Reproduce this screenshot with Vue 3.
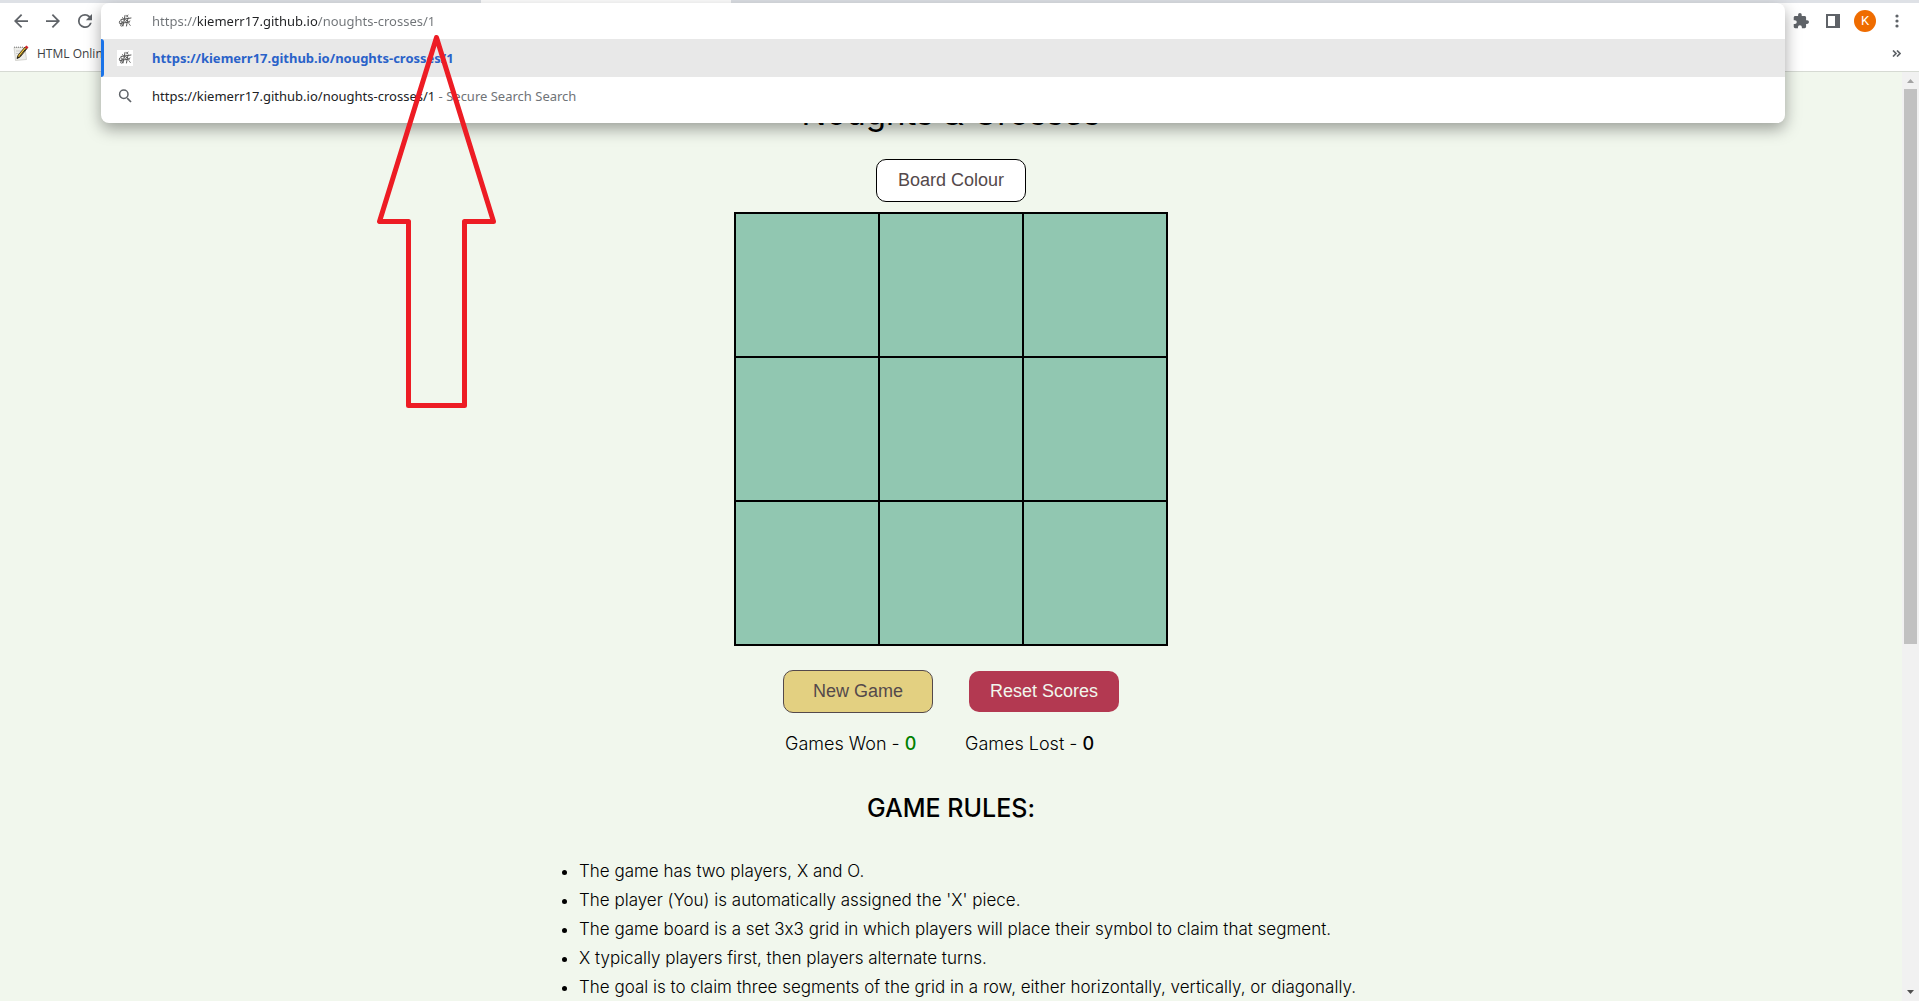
<script setup>
import { ref } from 'vue'

const url = ref('https://kiemerr17.github.io/noughts-crosses/1')
const won = ref(0)
const lost = ref(0)
const rules = [
  'The game has two players, X and O.',
  "The player (You) is automatically assigned the 'X' piece.",
  'The game board is a set 3x3 grid in which players will place their symbol to claim that segment.',
  'X typically players first, then players alternate turns.',
  'The goal is to claim three segments of the grid in a row, either horizontally, vertically, or diagonally.',
]
</script>

<template>
  <div class="window">
    <div class="tabs"><div class="tab"></div></div>

    <header class="toolbar">
      <nav class="group">
        <button class="tool" aria-label="Back">
          <svg width="14" height="14" viewBox="4 4 16 16"><path d="M20 11H7.83l5.59-5.59L12 4l-8 8 8 8 1.41-1.41L7.83 13H20v-2z" /></svg>
        </button>
        <button class="tool" aria-label="Forward">
          <svg width="14" height="14" viewBox="4 4 16 16"><path d="M12 4l-1.41 1.41L16.17 11H4v2h12.17l-5.58 5.59L12 20l8-8z" /></svg>
        </button>
        <button class="tool" aria-label="Reload">
          <svg width="14" height="14" viewBox="4 4 16 16"><path d="M17.65 6.35A7.96 7.96 0 0 0 12 4a8 8 0 1 0 7.73 10h-2.08A6 6 0 1 1 12 6c1.66 0 3.14.69 4.22 1.78L13 11h7V4l-2.35 2.35z" /></svg>
        </button>
      </nav>
      <nav class="group">
        <button class="tool" aria-label="Extensions">
          <svg width="16" height="16" viewBox="1 1 22 22"><path d="M20.5 11H19V7c0-1.1-.9-2-2-2h-4V3.5a2.5 2.5 0 0 0-5 0V5H4c-1.1 0-2 .9-2 2v3.8h1.5a2.7 2.7 0 0 1 0 5.4H2V20c0 1.1.9 2 2 2h3.8v-1.5a2.7 2.7 0 0 1 5.4 0V22H17c1.1 0 2-.9 2-2v-4h1.5a2.5 2.5 0 0 0 0-5z" /></svg>
        </button>
        <button class="tool" aria-label="Side panel">
          <svg width="14" height="14" viewBox="0 0 14 14"><path fill-rule="evenodd" d="M0 0h14v14H0zM2 2v10h7V2z" /></svg>
        </button>
        <button class="tool" aria-label="Profile"><span class="avatar">K</span></button>
        <button class="tool" aria-label="Menu">
          <svg width="4" height="14" viewBox="0 0 4 14"><circle cx="2" cy="2" r="1.6" /><circle cx="2" cy="7" r="1.6" /><circle cx="2" cy="12" r="1.6" /></svg>
        </button>
      </nav>
    </header>

    <div class="bookmarks">
      <a href="#" class="bookmark">
        <svg width="16" height="16" viewBox="0 0 16 16">
          <path d="M1 2.500h11l1.500 12L2.500 15.500z" fill="#ededea" stroke="#c6c6c0" stroke-width=".7" />
          <path d="M1 2.200h9" stroke="#777" stroke-dasharray="1 1" />
          <path d="M3 6h5M3 8.500h3M4 11h1" stroke="#bbb" stroke-width=".7" />
          <path d="M4 13.500l1.200-3.500L12 2l2 1.600L7.200 12z" fill="#f2c230" stroke="#3a3020" stroke-width=".9" />
          <path d="M6.500 11.500L13.400 3.200" stroke="#222" stroke-width="1" />
          <path d="M11.800 2.300L13.300.500l2.200 1.700L14 4z" fill="#d3222a" />
          <path d="M4 13.500l.8-2.200 1.600 1.200z" fill="#111" />
        </svg>
        <span>HTML Online</span>
      </a>
      <button class="tool more" aria-label="More bookmarks">
        <svg width="9" height="7" viewBox="0 0 9 7"><path d="M1 .5l3 3-3 3M5 .5l3 3-3 3" fill="none" stroke="#5f6368" stroke-width="1.700" /></svg>
      </button>
    </div>

    <div class="view">
      <main class="page">
        <h1>Noughts &amp; Crosses</h1>
        <button class="btn colour">Board Colour</button>
        <div class="board">
          <button v-for="n in 9" :key="n" class="cell" :aria-label="`Square ${n}`"></button>
        </div>
        <div class="actions">
          <button class="btn new">New Game</button>
          <button class="btn reset">Reset Scores</button>
        </div>
        <div class="scores">
          <span>Games Won - <b class="won">{{ won }}</b></span>
          <span>Games Lost - <b>{{ lost }}</b></span>
        </div>
        <h2>GAME RULES:</h2>
        <ul class="rules">
          <li v-for="rule in rules" :key="rule">{{ rule }}</li>
        </ul>
      </main>
      <div class="scrollbar">
        <svg width="7" height="4" viewBox="0 0 7 4"><path d="M0 4L3.500 0 7 4z" fill="#a3a3a3" /></svg>
        <div class="track"><div class="thumb"></div></div>
        <svg width="7" height="4" viewBox="0 0 7 4"><path d="M0 0l3.500 4L7 0z" fill="#505050" /></svg>
      </div>
    </div>

    <svg width="0" height="0" class="defs">
      <symbol id="fav" viewBox="0 0 16 16">
        <rect width="16" height="16" fill="#fff" />
        <g fill="none" stroke="#555" stroke-width="1" stroke-linecap="round">
          <path d="M8 2.500L6 13M11 5L9.500 13M4 6.500L14 5M3 10.500L12.500 9" />
          <path d="M9.500 2.200l1.500 1.800M11 2L9.500 4M11.800 10.500l1.500 2M5.500 4.500l1 1.500M13 8l-2 1" stroke-width=".8" />
          <circle cx="3.800" cy="9.200" r="1.500" stroke-width=".9" />
          <circle cx="4.500" cy="12.200" r="1" stroke-width=".8" />
          <circle cx="8.500" cy="7.500" r="1" stroke-width=".7" />
        </g>
      </symbol>
    </svg>

    <section class="omnibox">
      <label class="row">
        <svg class="icon" viewBox="0 0 16 16"><use href="#fav" /></svg>
        <input v-model="url" class="url" type="text" aria-label="Address" spellcheck="false" />
      </label>
      <a href="#" class="row active">
        <svg class="icon" viewBox="0 0 16 16"><use href="#fav" /></svg>
        <strong>{{ url }}</strong>
      </a>
      <a href="#" class="row">
        <svg class="icon" viewBox="0 0 16 16"><path d="M10.200 10.200L14 14" stroke="#5f6368" stroke-width="1.700" /><circle cx="6.800" cy="6.300" r="4.200" fill="none" stroke="#5f6368" stroke-width="1.500" /></svg>
        <span>{{ url }}<span class="hint"> - Secure Search Search</span></span>
      </a>
    </section>

    <svg class="arrow" width="124" height="376" viewBox="0 0 124 376">
      <path d="M61.500 4.500L4.500 188.500H33.500V372.500H89.500V188.500H118.500Z" />
    </svg>
  </div>
</template>

<style>
body { margin: 0; }
</style>

<style scoped>
.window {
  position: relative;
  display: flex;
  flex-direction: column;
  height: 100vh;
  overflow: hidden;
  background: #fff;
  color: #202124;
  font-family: "Noto Sans", "Open Sans", sans-serif;
  font-size: 13px;
}
button { font: inherit; padding: 0; cursor: pointer; }
a { color: inherit; text-decoration: none; }
svg { display: block; flex: none; }

.tabs { height: 3px; flex: none; background: #dee1e6; }
.tab { width: 250px; height: 3px; margin-left: 481px; background: #fff; }

.toolbar {
  display: flex;
  justify-content: space-between;
  align-items: center;
  height: 36px;
  flex: none;
  padding: 0 6px 0 5px;
}
.group { display: flex; }
.tool {
  display: flex;
  align-items: center;
  justify-content: center;
  width: 32px;
  height: 32px;
  border: 0;
  background: none;
  fill: #5f6368;
}
.avatar {
  width: 22px;
  height: 22px;
  border-radius: 50%;
  background: #ef6c00;
  color: #fff;
  font: 13px/22px Roboto, sans-serif;
}

.bookmarks {
  display: flex;
  justify-content: space-between;
  align-items: center;
  height: 33px;
  flex: none;
  box-sizing: border-box;
  padding: 0 7px 4px 13px;
  border-bottom: 1px solid #d6dad3;
}
.bookmark {
  display: flex;
  align-items: center;
  gap: 8px;
  color: #3c4043;
  font-family: "Open Sans", sans-serif;
  font-size: 12px;
}

.view { flex: 1; min-height: 0; display: flex; }
.page {
  flex: 1;
  min-width: 0;
  overflow: hidden;
  display: flex;
  flex-direction: column;
  align-items: center;
  background: #f1f7ed;
  color: #000;
  font-family: Inter, "Open Sans", sans-serif;
  font-weight: 300;
  font-feature-settings: "calt" 0;
}
.page > * { flex: none; }
h1 { margin: 21px 0 26px; font-size: 33px; line-height: 40px; font-weight: 400; }
.btn {
  width: 150px;
  height: 43px;
  border: 1px solid #000;
  border-radius: 10px;
  background: #fff;
  color: #54494b;
  font-family: "Liberation Sans", Arial, sans-serif;
  font-size: 18px;
}
.board {
  display: grid;
  grid-template-columns: repeat(3, 142px);
  grid-auto-rows: 142px;
  gap: 2px;
  margin: 10px 0 24px;
  padding: 2px;
  background: #000;
}
.cell { border: 0; background: #91c7b1; }
.actions { display: flex; align-items: center; gap: 36px; }
.btn.new { background: #e3d081; border-color: #54494b; }
.btn.reset { height: 41px; border: 0; background: #b33951; color: #f1f7ed; }
.scores {
  display: grid;
  grid-template-columns: 180px 1fr;
  box-sizing: border-box;
  width: 336px;
  margin-top: 19px;
  padding-left: 2px;
  font-size: 18px;
  line-height: 24px;
}
.scores b { font-weight: 500; }
.scores .won { color: #008000; }
h2 { margin: 36px 0 33px; font-size: 25px; line-height: 32px; font-weight: 500; }
.rules {
  box-sizing: border-box;
  width: 824px;
  max-width: 100%;
  margin: 0;
  padding-left: 40px;
  font-size: 17px;
  line-height: 29px;
}

.scrollbar {
  display: flex;
  flex-direction: column;
  align-items: center;
  gap: 6px;
  box-sizing: border-box;
  width: 17px;
  padding: 7px 0;
  background: #f1f1f1;
}
.track { flex: 1; width: 13px; }
.thumb { height: 62%; background: #c1c1c1; }

.defs { position: absolute; }
.omnibox {
  position: absolute;
  top: 3px;
  left: 101px;
  right: 134px;
  padding-bottom: 8px;
  border-radius: 8px;
  background: #fff;
  box-shadow: 0 6px 16px rgba(0, 0, 0, .36);
  overflow: hidden;
}
.row { display: flex; align-items: center; gap: 19px; height: 38px; padding-left: 16px; }
.row:first-child { height: 36px; }
.icon { width: 16px; height: 16px; }
.active { position: relative; background: #e8e8e8; color: #2a62c9; }
.active::before {
  content: "";
  position: absolute;
  left: 0;
  top: 0;
  bottom: 0;
  width: 3px;
  border-radius: 0 3px 3px 0;
  background: #1a73e8;
}
.active strong { font-weight: 700; }
.url {
  flex: 1;
  padding: 0;
  border: 0;
  outline: 0;
  font: inherit;
  color: transparent;
  background: linear-gradient(90deg, #6f7377 46px, #202124 46px 166px, #6f7377 166px);
  background-clip: text;
}
.hint { color: #6f7377; }

.arrow { position: absolute; left: 375px; top: 33px; pointer-events: none; }
.arrow path { fill: none; stroke: #ed1c24; stroke-width: 5; stroke-linejoin: round; }
</style>
